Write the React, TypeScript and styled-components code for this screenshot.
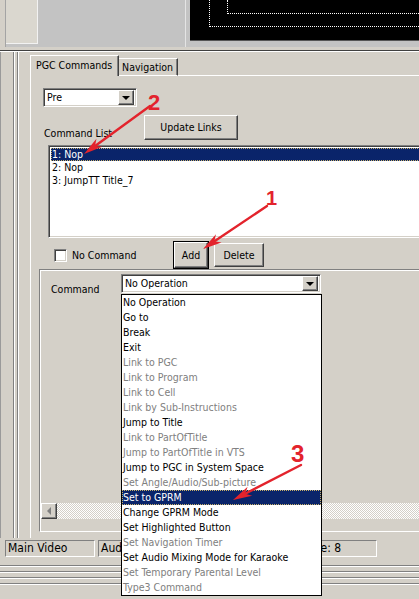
import React from "react";
import styled, { createGlobalStyle, css } from "styled-components";

// classic windows bevels
const raised = css`
  border-top: 1px solid #fff;
  border-left: 1px solid #fff;
  border-right: 1px solid #404040;
  border-bottom: 1px solid #404040;
  box-shadow: inset -1px -1px #808080;
`;

const sunken = css`
  border-top: 1px solid #808080;
  border-left: 1px solid #808080;
  border-right: 1px solid #fff;
  border-bottom: 1px solid #fff;
  box-shadow: inset 1px 1px #404040, inset -1px -1px #d4d0c8;
`;

const GlobalStyle = createGlobalStyle`
  html, body {
    margin: 0;
    padding: 0;
    background: #d4d0c8;
    overflow: hidden;
  }
`;

const COMMANDS: { label: string; dim?: boolean; selected?: boolean }[] = [
  { label: "No Operation" },
  { label: "Go to" },
  { label: "Break" },
  { label: "Exit" },
  { label: "Link to PGC", dim: true },
  { label: "Link to Program", dim: true },
  { label: "Link to Cell", dim: true },
  { label: "Link by Sub-Instructions", dim: true },
  { label: "Jump to Title" },
  { label: "Link to PartOfTitle", dim: true },
  { label: "Jump to PartOfTitle in VTS", dim: true },
  { label: "Jump to PGC in System Space" },
  { label: "Set Angle/Audio/Sub-picture", dim: true },
  { label: "Set to GPRM", selected: true },
  { label: "Change GPRM Mode" },
  { label: "Set Highlighted Button" },
  { label: "Set Navigation Timer", dim: true },
  { label: "Set Audio Mixing Mode for Karaoke" },
  { label: "Set Temporary Parental Level", dim: true },
  { label: "Type3 Command", dim: true },
];

const NOTES = [
  { tail: [150, 106], tip: [84, 154], label: "2", lx: 148, ly: 110, size: 22 },
  { tail: [267, 206], tip: [203, 249], label: "1", lx: 266, ly: 205, size: 20 },
  { tail: [301, 465], tip: [233, 500], label: "3", lx: 291, ly: 462, size: 24 },
];

const headPoints = (x1: number, y1: number, x2: number, y2: number) => {
  const len = 19;
  const half = 5;
  const l = Math.hypot(x2 - x1, y2 - y1);
  const ux = (x2 - x1) / l;
  const uy = (y2 - y1) / l;
  const bx = x2 - ux * len;
  const by = y2 - uy * len;
  const mx = x2 - ux * len * 0.72;
  const my = y2 - uy * len * 0.72;
  return `${x2},${y2} ${bx - uy * half},${by + ux * half} ${mx},${my} ${bx + uy * half},${by - ux * half}`;
};

const App = () => {
  return (
    <Screen>
      <GlobalStyle />

      <TopBar>
        <SideEdge />
        <ThumbPane />
        <GrayPane />
        <ViewerGap />
        <Viewer>
          <SafeOuter>
            <SafeInner />
          </SafeOuter>
        </Viewer>
      </TopBar>
      <TopDivider />

      <Main>
        <Rail />
        <TabArea>
          <TabRow>
            <Tab $active>PGC Commands</Tab>
            <Tab>Navigation</Tab>
            <TabFiller />
          </TabRow>

          <Panel>
            <Combo $width={94}>
              <ComboText>Pre</ComboText>
              <DropButton>
                <DropArrow />
              </DropButton>
            </Combo>

            <LinkRow>
              <FieldLabel>Command List</FieldLabel>
              <Button $width={94} $height={25}>
                Update Links
              </Button>
            </LinkRow>

            <ListBox>
              <ListRow $selected>1: Nop</ListRow>
              <ListRow>2: Nop</ListRow>
              <ListRow>3: JumpTT Title_7</ListRow>
            </ListBox>

            <ActionRow>
              <CheckWrap>
                <CheckBox />
                No Command
              </CheckWrap>
              <Button $width={34} $height={26} $default>
                Add
              </Button>
              <Button $width={50} $height={24}>
                Delete
              </Button>
            </ActionRow>

            <Frame>
              <CommandRow>
                <CommandLabel>Command</CommandLabel>
                <ComboWrap>
                  <Combo $width={200}>
                    <ComboText>No Operation</ComboText>
                    <DropButton>
                      <DropArrow />
                    </DropButton>
                  </Combo>
                  <DropList>
                    {COMMANDS.map((c) => (
                      <DropItem key={c.label} $dim={c.dim} $selected={c.selected}>
                        {c.label}
                      </DropItem>
                    ))}
                  </DropList>
                </ComboWrap>
              </CommandRow>

              <HScroll>
                <ScrollArrow>
                  <ScrollArrowGlyph />
                </ScrollArrow>
                <ScrollTrack />
              </HScroll>
            </Frame>
          </Panel>
        </TabArea>
      </Main>

      <StatusBar>
        <StatusPanel $width={90}>Main Video</StatusPanel>
        <StatusPanel $width={188}>Audio</StatusPanel>
        <StatusPanel $width={88} $indent={15}>
          Size: 8
        </StatusPanel>
      </StatusBar>

      <BottomLines>
        <Etch />
        <Etch />
        <Etch />
        <Etch />
      </BottomLines>

      <Notes viewBox="0 0 419 599" width={419} height={599}>
        {NOTES.map((n) => {
          const [x1, y1] = n.tail;
          const [x2, y2] = n.tip;
          const l = Math.hypot(x2 - x1, y2 - y1);
          const ex = x2 - ((x2 - x1) / l) * 12;
          const ey = y2 - ((y2 - y1) / l) * 12;
          return (
            <g key={n.label}>
              <line x1={x1} y1={y1} x2={ex} y2={ey} stroke="#e3232c" strokeWidth={2.4} strokeLinecap="round" />
              <polygon points={headPoints(x1, y1, x2, y2)} fill="#e3232c" />
              <text
                x={n.lx}
                y={n.ly}
                fill="#e3232c"
                fontSize={n.size}
                fontWeight="bold"
                fontFamily="'Liberation Sans', Arial, sans-serif"
              >
                {n.label}
              </text>
            </g>
          );
        })}
      </Notes>
    </Screen>
  );
};

const Screen = styled.div`
  position: relative;
  width: 419px;
  height: 599px;
  overflow: hidden;

  display: flex;
  flex-direction: column;

  background: #d4d0c8;
  color: #000;
  font-family: "DejaVu Sans Condensed", "Liberation Sans", Arial, sans-serif;
  font-size: 10.5px;
  line-height: 13px;
`;

// top preview strip
const TopBar = styled.div`
  height: 47px;
  display: flex;
  flex-shrink: 0;
  background: #c3c3c3;
`;

const SideEdge = styled.div`
  width: 5px;
  background: #d4d0c8;
  border-right: 1px solid #a4a4a4;
`;

const ThumbPane = styled.div`
  width: 31px;
  height: 43px;
  background: #dad7cf;
  border-bottom: 1px solid #f2f2f2;
  border-right: 1px solid #f2f2f2;
`;

const GrayPane = styled.div`
  width: 147px;
  background: #c3c3c3;
  border-right: 1px solid #e4e4e4;
`;

const ViewerGap = styled.div`
  width: 4px;
`;

const Viewer = styled.div`
  flex: 1;
  height: 40px;
  display: flex;
  align-items: flex-start;
  background: #000;
  border-bottom: 1px solid #555;
`;

const SafeOuter = styled.div`
  flex: 1;
  height: 26px;
  margin-left: 19px;
  display: flex;
  align-items: flex-start;
  border-left: 1px dotted #fff;
  border-bottom: 1px dotted #fff;
`;

const SafeInner = styled.div`
  flex: 1;
  height: 13px;
  margin-left: 17px;
  border-left: 1px dotted #fff;
  border-bottom: 1px dotted #fff;
`;

const TopDivider = styled.div`
  height: 3px;
  flex-shrink: 0;
  border-bottom: 1px solid #404040;
`;

// main editor
const Main = styled.div`
  height: 486px;
  flex-shrink: 0;
  display: flex;
  border-top: 1px solid #fff;
`;

const Rail = styled.div`
  width: 29px;
  border-left: 1px solid #9a9a9a;
  background: linear-gradient(
    to right,
    transparent 12px,
    #808080 12px 13px,
    #fff 13px 14px,
    transparent 14px 16px,
    #808080 16px 17px,
    #fff 17px 18px,
    transparent 18px
  );
`;

const TabArea = styled.div`
  flex: 1;
  display: flex;
  flex-direction: column;
  padding-top: 3px;
`;

const TabRow = styled.div`
  height: 21px;
  display: flex;
  align-items: flex-end;
`;

const Tab = styled.div<{ $active?: boolean }>`
  height: ${(p) => (p.$active ? 21 : 18)}px;
  padding: ${(p) => (p.$active ? "0 6px 2px 5px" : "0 4px 0 3px")};

  display: flex;
  align-items: center;
  box-sizing: border-box;

  background: #d4d0c8;
  border-top: 1px solid #fff;
  border-left: ${(p) => (p.$active ? "1px solid #fff" : "none")};
  border-right: 1px solid #404040;
  border-bottom: ${(p) => (p.$active ? "none" : "1px solid #fff")};
  box-shadow: inset -1px 0 #808080;
  white-space: nowrap;
`;

const TabFiller = styled.div`
  flex: 1;
  border-bottom: 1px solid #fff;
`;

const Panel = styled.div`
  flex: 1;
  display: flex;
  flex-direction: column;
  padding: 12px 0 6px 12px;
  border-left: 1px solid #fff;
`;

const Combo = styled.div<{ $width: number }>`
  width: ${(p) => p.$width}px;
  height: 19px;
  box-sizing: border-box;
  padding: 2px;

  display: flex;
  align-items: center;

  background: #fff;
  ${sunken}
`;

const ComboText = styled.div`
  flex: 1;
  padding-left: 1px;
  white-space: nowrap;
`;

const DropButton = styled.div`
  width: 16px;
  height: 15px;
  box-sizing: border-box;

  display: flex;
  align-items: center;
  justify-content: center;

  background: #d4d0c8;
  ${raised}
`;

const DropArrow = styled.div`
  width: 0;
  height: 0;
  border-left: 4px solid transparent;
  border-right: 4px solid transparent;
  border-top: 4px solid #000;
`;

const LinkRow = styled.div`
  margin-top: 8px;
  display: flex;
  align-items: flex-end;
`;

const FieldLabel = styled.div`
  width: 100px;
  padding-left: 1px;
  white-space: nowrap;
`;

const Button = styled.div<{ $width: number; $height: number; $default?: boolean }>`
  width: ${(p) => p.$width}px;
  height: ${(p) => p.$height}px;
  box-sizing: border-box;

  display: flex;
  align-items: center;
  justify-content: center;

  background: #d4d0c8;
  ${raised}
  ${(p) =>
    p.$default &&
    css`
      outline: 1px solid #000;
      outline-offset: 0;
    `}
`;

const ListBox = styled.div`
  height: 93px;
  margin: 5px -6px 0 5px;
  padding: 2px;
  box-sizing: border-box;

  background: #fff;
  ${sunken}
`;

const ListRow = styled.div<{ $selected?: boolean }>`
  height: 13px;
  padding-left: 1px;
  white-space: nowrap;

  ${(p) =>
    p.$selected &&
    css`
      background: #0a246a;
      color: #fff;
      outline: 1px dotted #c7b06a;
      outline-offset: -1px;
    `}
`;

const ActionRow = styled.div`
  height: 26px;
  margin-top: 4px;
  display: flex;
  align-items: center;
  gap: 6px;
`;

const CheckWrap = styled.div`
  width: 114px;
  padding-left: 11px;
  display: flex;
  align-items: center;
  gap: 5px;
  white-space: nowrap;
`;

const CheckBox = styled.div`
  width: 13px;
  height: 13px;
  box-sizing: border-box;
  background: #fff;
  ${sunken}
`;

const Frame = styled.div`
  flex: 1;
  margin: 1px -6px 0 -4px;
  display: flex;
  flex-direction: column;
  justify-content: space-between;

  border-top: 1px solid #808080;
  border-left: 1px solid #808080;
  border-bottom: 1px solid #fff;
  box-shadow: inset 1px 1px #fff;
  padding: 4px 0 12px 1px;
`;

const CommandRow = styled.div`
  display: flex;
  align-items: flex-start;
`;

const CommandLabel = styled.div`
  width: 70px;
  padding: 9px 0 0 10px;
  white-space: nowrap;
`;

const ComboWrap = styled.div`
  position: relative;
`;

const DropList = styled.div`
  position: absolute;
  top: 20px;
  left: 0;
  z-index: 3;

  width: 201px;
  box-sizing: border-box;

  background: #fff;
  border: 1px solid #000;
`;

const DropItem = styled.div<{ $dim?: boolean; $selected?: boolean }>`
  height: 15px;
  line-height: 15px;
  padding-left: 1px;
  white-space: nowrap;
  color: ${(p) => (p.$dim ? "#808080" : "#000")};

  ${(p) =>
    p.$selected &&
    css`
      background: #0a246a;
      color: #fff;
      outline: 1px dotted #c7b06a;
      outline-offset: -1px;
    `}
`;

const HScroll = styled.div`
  height: 16px;
  display: flex;
`;

const ScrollArrow = styled.div`
  width: 16px;
  height: 16px;
  box-sizing: border-box;

  display: flex;
  align-items: center;
  justify-content: center;

  background: #d4d0c8;
  ${raised}
`;

const ScrollArrowGlyph = styled.div`
  width: 0;
  height: 0;
  border-top: 4px solid transparent;
  border-bottom: 4px solid transparent;
  border-right: 4px solid #808080;
`;

const ScrollTrack = styled.div`
  flex: 1;
  background-color: #d4d0c8;
  background-image: repeating-conic-gradient(#fff 0% 25%, transparent 0% 50%);
  background-size: 2px 2px;
`;

// status bar
const StatusBar = styled.div`
  height: 22px;
  flex-shrink: 0;
  box-sizing: border-box;
  padding: 2px 0 0 5px;
  display: flex;
  gap: 3px;
`;

const StatusPanel = styled.div<{ $width: number; $indent?: number }>`
  width: ${(p) => p.$width}px;
  height: 17px;
  box-sizing: border-box;
  padding-left: ${(p) => p.$indent ?? 2}px;

  display: flex;
  align-items: center;
  white-space: nowrap;
  overflow: hidden;

  border-top: 1px solid #808080;
  border-left: 1px solid #808080;
  border-right: 1px solid #fff;
  border-bottom: 1px solid #fff;
  font-size: 12px;
`;

const BottomLines = styled.div`
  flex: 1;
  padding-top: 5px;
  display: flex;
  flex-direction: column;
  gap: 4px;
`;

const Etch = styled.div`
  border-top: 1px solid #808080;
  border-bottom: 1px solid #fff;
`;

const Notes = styled.svg`
  position: absolute;
  left: 0;
  top: 0;
  z-index: 5;
  pointer-events: none;
`;

export default App;
